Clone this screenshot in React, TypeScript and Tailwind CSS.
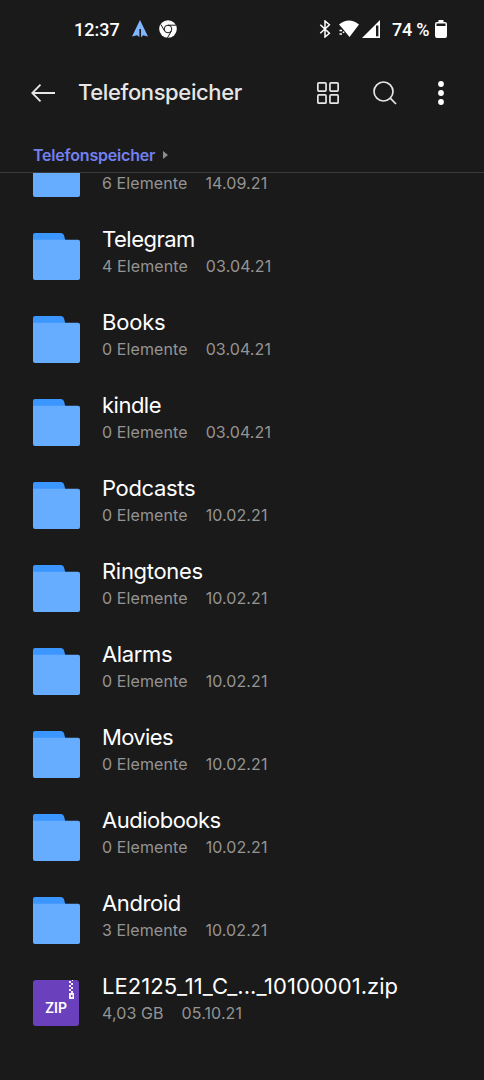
import clsx from 'clsx';

interface Entry {
    name: string;
    info: string;
    date: string;
    type: 'folder' | 'zip';
    nameClass?: string;
}

const entries: Entry[] = [
    { name: '', info: '6 Elemente', date: '14.09.21', type: 'folder' },
    { name: 'Telegram', info: '4 Elemente', date: '03.04.21', type: 'folder', nameClass: 'tracking-[-0.5px]' },
    { name: 'Books', info: '0 Elemente', date: '03.04.21', type: 'folder', nameClass: 'tracking-[-0.2px]' },
    { name: 'kindle', info: '0 Elemente', date: '03.04.21', type: 'folder', nameClass: 'tracking-[-0.5px]' },
    { name: 'Podcasts', info: '0 Elemente', date: '10.02.21', type: 'folder', nameClass: 'tracking-[-0.35px]' },
    { name: 'Ringtones', info: '0 Elemente', date: '10.02.21', type: 'folder', nameClass: 'tracking-[-0.3px]' },
    { name: 'Alarms', info: '0 Elemente', date: '10.02.21', type: 'folder', nameClass: 'tracking-[-0.35px]' },
    { name: 'Movies', info: '0 Elemente', date: '10.02.21', type: 'folder', nameClass: 'tracking-[-0.65px]' },
    { name: 'Audiobooks', info: '0 Elemente', date: '10.02.21', type: 'folder', nameClass: 'tracking-[-0.5px]' },
    { name: 'Android', info: '3 Elemente', date: '10.02.21', type: 'folder', nameClass: 'tracking-[-0.4px]' },
    { name: 'LE2125_11_C_..._10100001.zip', info: '4,03 GB', date: '05.10.21', type: 'zip', nameClass: 'tracking-[0.04px]' },
];

function FolderIcon() {
    return (
        <svg width="47" height="47" viewBox="0 0 47 47">
            <path d="M0 2a2 2 0 0 1 2-2h25.500q2.500 0 3.400 2L33 10H0z" fill="#3b96ff" />
            <path d="M0 6.700h45a2 2 0 0 1 2 2V45a2 2 0 0 1-2 2H2a2 2 0 0 1-2-2z" fill="#66adff" />
        </svg>
    );
}

function ZipIcon() {
    return (
        <div className="relative flex h-[46px] w-[46px] items-end justify-center rounded-[3px] bg-[#6b40bd]">
            <span className="pb-[10px] text-[14px] leading-[16px] font-semibold text-white">ZIP</span>
            <svg width="5" height="19" viewBox="0 0 5 19" className="absolute top-0 right-[5px]">
                <path
                    d="M0 1h2v2H0zM2 3h2v2H2zM0 5h2v2H0zM2 7h2v2H2zM0 9h2v2H0zM2 11h2v2H2zM3 0h1v1H3zM0 13h5v6H0z"
                    fill="#f3effa"
                />
                <path d="M2 15h1.500v2H2z" fill="#6b40bd" />
            </svg>
        </div>
    );
}

function StatusBar() {
    return (
        <div className="flex h-[58px] items-center pr-[37px] pl-[74px] font-[Roboto] text-[18px] font-medium text-white">
            <span className="w-[58px]">12:37</span>
            <svg width="16" height="18" viewBox="0 0 16 18">
                <path d="M8 0l8 16.500-5-1.300L9 17.500V9H7.400v8L5 15.200l-5 1.300z" fill="#80b5ff" />
            </svg>
            <svg width="18" height="18" viewBox="0 0 18 18" className="ml-[11px]">
                <circle cx="9" cy="9" r="8.800" fill="#fff" />
                <circle cx="9" cy="9" r="3.800" fill="none" stroke="#1a1a1a" strokeWidth="1" />
                <path d="M9 5.200h8M5.600 11L2 4.700M12.400 11l-4 6.900" stroke="#1a1a1a" strokeWidth="1" />
            </svg>
            <div className="flex-1" />
            <svg width="12" height="18" viewBox="0 0 12 18" className="mr-[8px]">
                <path
                    d="M1.300 4.800l9.100 8.400L6 17V1l4.400 3.800-9.100 8.400"
                    fill="none"
                    stroke="#fff"
                    strokeWidth="1.500"
                />
            </svg>
            <svg width="20" height="18" viewBox="0 0 20 18">
                <path d="M0 4.500Q10-3.300 20 4.500L10.500 17 4 9z" fill="#fff" />
                <path d="M.5 10.500h2.500M.5 14h2.500M3.700 12.200h1.600" stroke="#fff" strokeWidth="1.400" />
            </svg>
            <svg width="18" height="18" viewBox="0 0 18 18" className="ml-[3px]">
                <path d="M18 0v18H0z" fill="#fff" />
                <path d="M14 5.500h2.400v10.800H14z" fill="#1a1a1a" />
            </svg>
            <span className="ml-[12px] w-[38px] whitespace-nowrap tracking-[-0.2px]">74 %</span>
            <svg width="12" height="18" viewBox="0 0 12 18" className="ml-[5px]">
                <path d="M3.500 0h5v2H10a2 2 0 0 1 2 2v12a2 2 0 0 1-2 2H2a2 2 0 0 1-2-2V4a2 2 0 0 1 2-2h1.500z" fill="#fff" />
                <path d="M1.500 3.500h9V6h-9z" fill="#1a1a1a" />
            </svg>
        </div>
    );
}

function Header() {
    return (
        <header className="flex h-[70px] items-center pr-[40px] pl-[31px] text-[#e6e6e6]">
            <svg width="24" height="18" viewBox="0 0 24 18" fill="none" stroke="currentColor" strokeWidth="1.800">
                <path d="M9.500.700L1.300 9l8.200 8.300M1.300 9H24" />
            </svg>
            <h1 className="ml-[23px] flex-1 pb-[2px] text-[22px] leading-[28px] font-medium tracking-[-0.38px]">
                Telefonspeicher
            </h1>
            <svg width="22" height="22" viewBox="0 0 22 22" fill="none" stroke="currentColor" strokeWidth="1.700">
                <rect x=".850" y=".850" width="8.200" height="8.200" rx="1" />
                <rect x="12.950" y=".850" width="8.200" height="8.200" rx="1" />
                <rect x=".850" y="12.950" width="8.200" height="8.200" rx="1" />
                <rect x="12.950" y="12.950" width="8.200" height="8.200" rx="1" />
            </svg>
            <svg
                width="24"
                height="24"
                viewBox="0 0 24 24"
                fill="none"
                stroke="currentColor"
                strokeWidth="1.700"
                className="ml-[34px]"
            >
                <circle cx="10.500" cy="10.500" r="9.500" />
                <path d="M17.200 17.200l5.800 5.800" />
            </svg>
            <svg width="6" height="24" viewBox="0 0 6 24" fill="#fff" className="ml-[41px]">
                <circle cx="3" cy="3" r="2.900" />
                <circle cx="3" cy="12" r="2.900" />
                <circle cx="3" cy="21" r="2.900" />
            </svg>
        </header>
    );
}

function EntryRow({ entry }: { entry: Entry }) {
    return (
        <li className="flex h-[83px] items-center pl-[33px]">
            <div className={clsx('w-[69px]', entry.type === 'zip' && 'pb-[2px]')}>
                {entry.type === 'folder' ? <FolderIcon /> : <ZipIcon />}
            </div>
            <div className="pb-[9px] whitespace-nowrap">
                <div className={clsx('h-[28px] text-[22px] leading-[28px] text-white', entry.nameClass)}>
                    {entry.name}
                </div>
                <div className="flex gap-[18px] text-[16px] leading-[26px] tracking-[0.1px] text-[#949494]">
                    <span>{entry.info}</span>
                    <span>{entry.date}</span>
                </div>
            </div>
        </li>
    );
}

function App() {
    return (
        <div className="flex h-[1080px] w-[484px] flex-col overflow-hidden bg-[#1a1a1a] font-[Inter,sans-serif]">
            <StatusBar />
            <Header />
            <nav className="flex h-[45px] items-center border-b border-[#3a3a3a] pt-[10px] pl-[33px]">
                <span className="text-[16px] leading-[20px] font-semibold tracking-[-0.2px] text-[#7480ee]">
                    Telefonspeicher
                </span>
                <svg width="5" height="8" viewBox="0 0 5 8" className="ml-[8px]">
                    <path d="M0 0l5 4-5 4z" fill="#8c8c8c" />
                </svg>
            </nav>
            <main className="flex-1 overflow-hidden">
                <ul className="-mt-[41px]">
                    {entries.map((entry, index) => (
                        <EntryRow key={index} entry={entry} />
                    ))}
                </ul>
            </main>
        </div>
    );
}

export default App;
